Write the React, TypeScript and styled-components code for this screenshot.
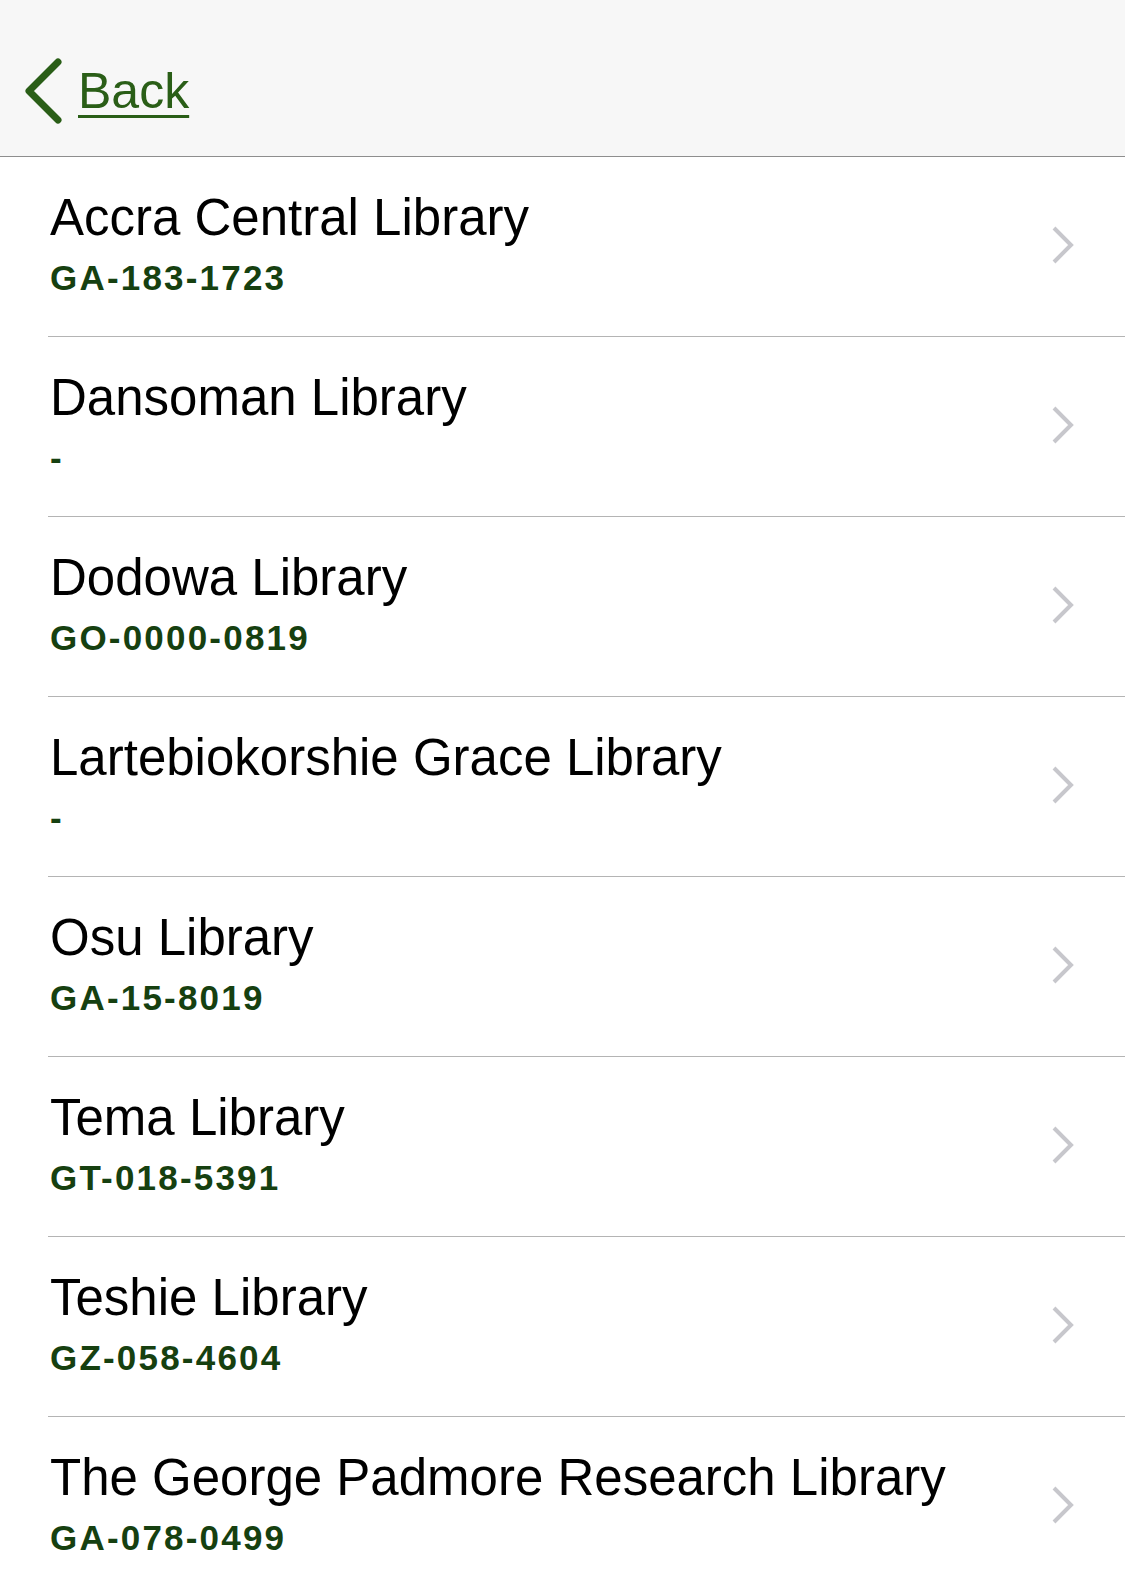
import React from "react";
import styled, { createGlobalStyle } from "styled-components";

const Global = createGlobalStyle`
  html, body { margin: 0; padding: 0; background: #ffffff; }
  body { font-family: "Liberation Sans", Arial, sans-serif; }
  * { box-sizing: border-box; }
`;

const Page = styled.div`
  width: 1125px;
  min-height: 1591px;
  background: #ffffff;
  overflow: hidden;
`;

const Header = styled.header`
  height: 157px;
  background: #f7f7f7;
  border-bottom: 1px solid #8e8e8e;
  display: flex;
  align-items: flex-start;
  padding: 58px 0 0 24px;
`;

const BackButton = styled.a`
  display: flex;
  align-items: center;
  gap: 12px;
  color: #2a5e17;
  text-decoration: none;
  cursor: pointer;
`;

const BackLabel = styled.span`
  font-size: 50px;
  line-height: 62px;
  color: #2a5e17;
  text-decoration: underline;
  text-decoration-thickness: 3px;
  text-underline-offset: 7px;
`;

const List = styled.ul`
  list-style: none;
  margin: 0;
  padding: 0;
`;

const Row = styled.li`
  margin-left: 48px;
  height: 180px;
  border-bottom: 1px solid #b4b4b4;
  display: flex;
  align-items: flex-start;
  padding: 33px 50px 0 2px;
`;

const Texts = styled.div`
  flex: 1;
  display: flex;
  flex-direction: column;
  gap: 13px;
`;

const Title = styled.div`
  font-size: 51px;
  line-height: 56px;
  color: #000000;
  white-space: nowrap;
`;

const Code = styled.div`
  font-size: 35px;
  line-height: 38px;
  font-weight: 700;
  letter-spacing: 2.2px;
  color: #164010;
`;

const Chevron = styled.svg`
  align-self: center;
  width: 24px;
  height: 38px;
  margin-top: -37px;
  flex-shrink: 0;
`;

const libraries = [
  { name: "Accra Central Library", code: "GA-183-1723" },
  { name: "Dansoman Library", code: "-" },
  { name: "Dodowa Library", code: "GO-0000-0819" },
  { name: "Lartebiokorshie Grace Library", code: "-" },
  { name: "Osu Library", code: "GA-15-8019" },
  { name: "Tema Library", code: "GT-018-5391" },
  { name: "Teshie Library", code: "GZ-058-4604" },
  { name: "The George Padmore Research Library", code: "GA-078-0499" },
];

export default function App() {
  return (
    <Page>
      <Global />
      <Header>
        <BackButton>
          <svg width="42" height="66" viewBox="0 0 42 66">
            <polyline
              points="34,4 5,33 34,62"
              fill="none"
              stroke="#2a5e17"
              strokeWidth="7"
              strokeLinecap="round"
              strokeLinejoin="round"
            />
          </svg>
          <BackLabel>Back</BackLabel>
        </BackButton>
      </Header>
      <List>
        {libraries.map((lib) => (
          <Row key={lib.name}>
            <Texts>
              <Title>{lib.name}</Title>
              <Code>{lib.code}</Code>
            </Texts>
            <Chevron viewBox="0 0 24 38">
              <polyline
                points="3,2 20,19 3,36"
                fill="none"
                stroke="#c7c7cc"
                strokeWidth="4"
              />
            </Chevron>
          </Row>
        ))}
      </List>
    </Page>
  );
}
